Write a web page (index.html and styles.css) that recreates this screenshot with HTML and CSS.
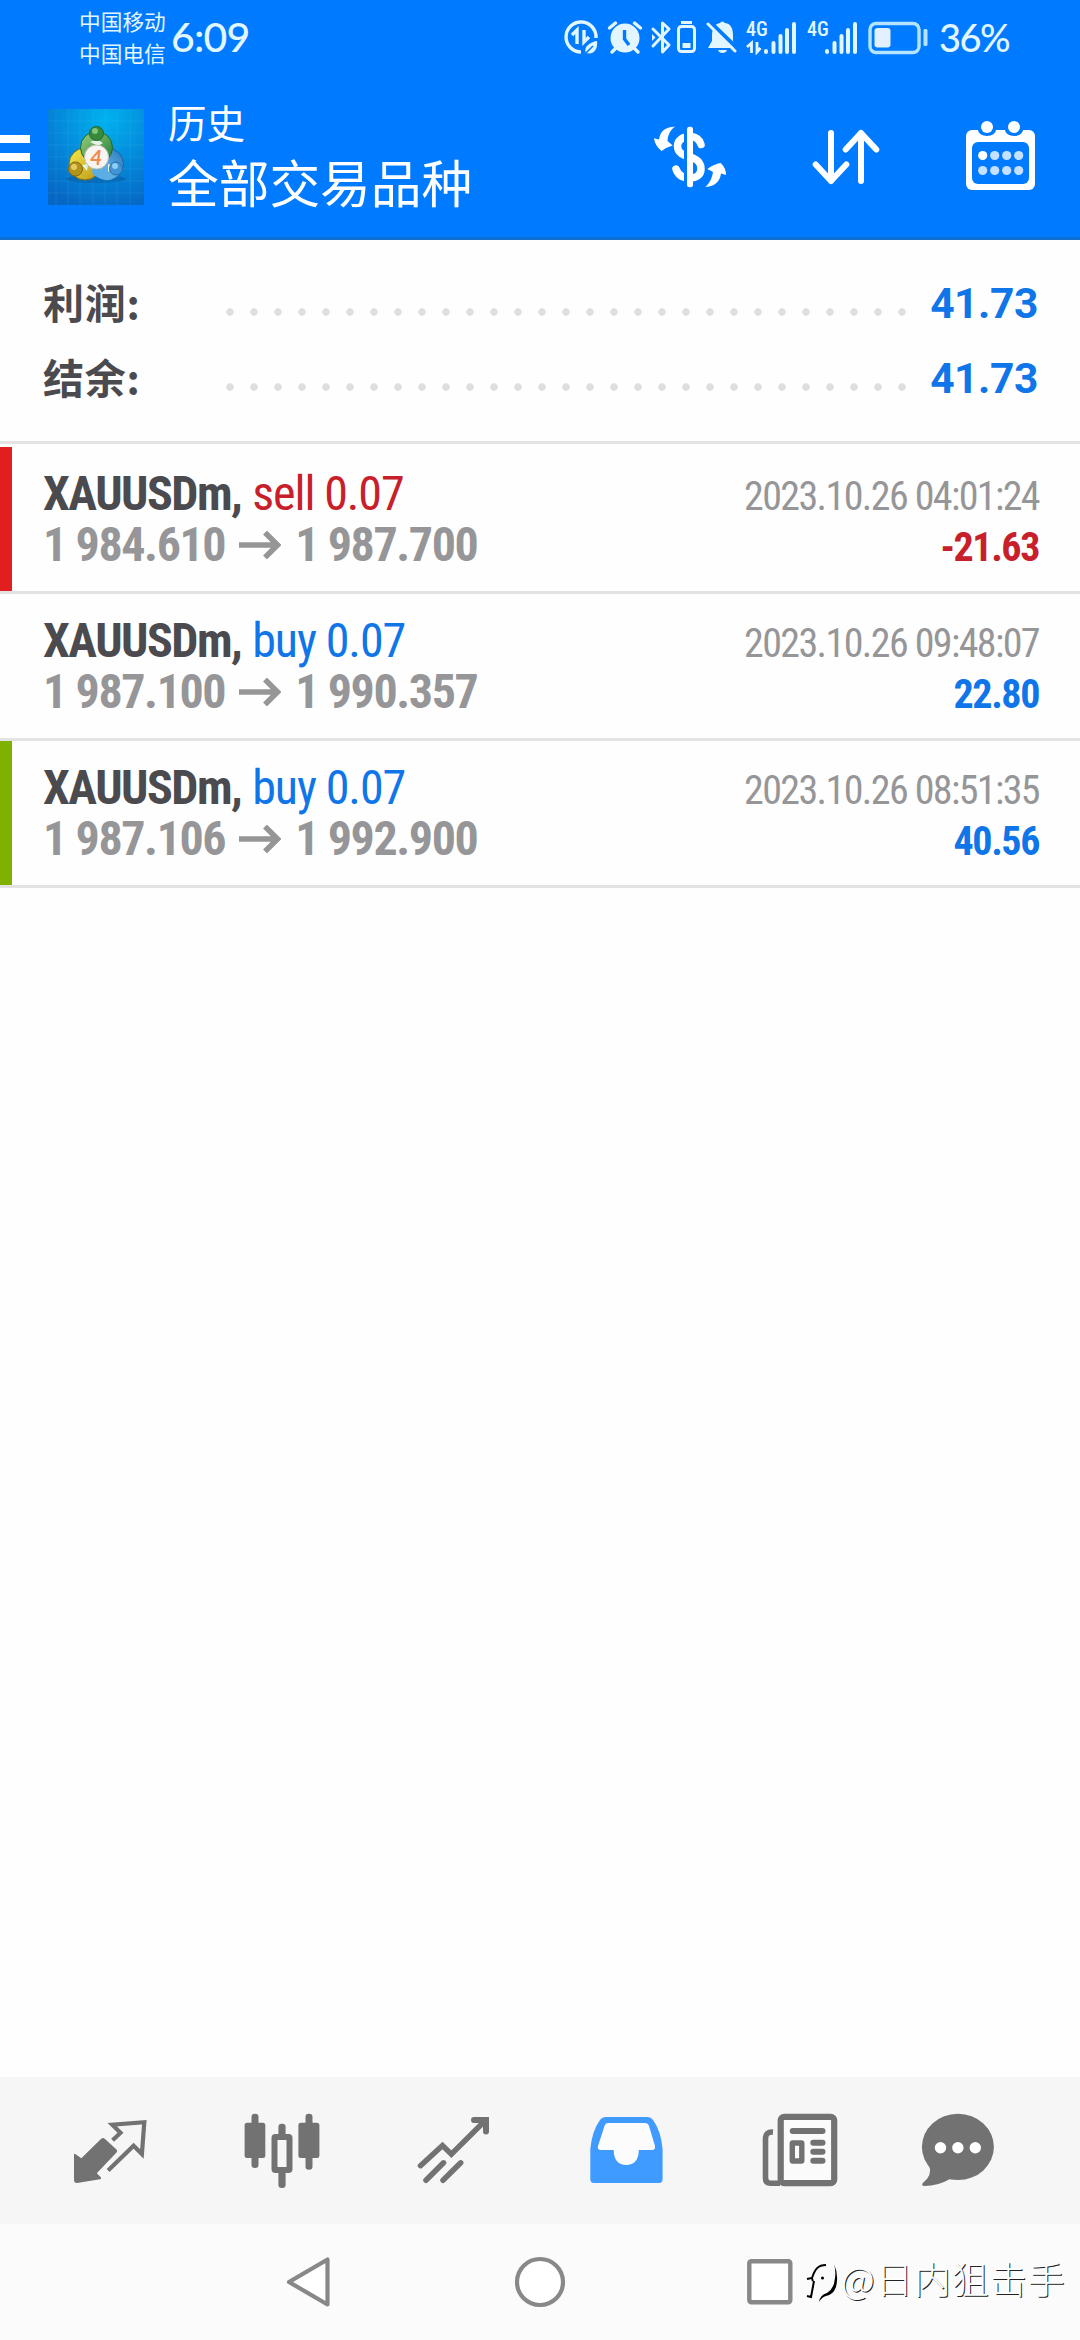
FILE: index.html
```html
<!DOCTYPE html>
<html lang="zh-CN">
<head>
    <meta charset="UTF-8">
    <title>历史</title>
    <link rel="stylesheet" href="styles.css">
</head>
<body>
    <header class="header">
        <div class="status-bar">
            <div class="carriers">
                <span>中国移动</span>
                <span>中国电信</span>
            </div>
            <span class="clock">6:09</span>
            <div class="status-icons">
                <!-- data saver -->
                <svg width="42" height="36" viewBox="0 0 42 36">
                    <path d="M32 19 A15 15 0 1 0 17 33" fill="none" stroke="#e2f6ff" stroke-width="3.4" />
                    <path d="M8 16 L13 11 V25 M20 11 V23 L25 18" fill="none" stroke="#e2f6ff" stroke-width="3.4" />
                    <path d="M33 22 C34 30 30 36 22 34 C19 28 26 23 33 22 Z" fill="#e2f6ff" />
                    <path d="M21 35 L29 27" stroke="#007aff" stroke-width="1.6" />
                </svg>
                <!-- alarm -->
                <svg width="44" height="36" viewBox="-2 0 44 36">
                    <circle cx="17" cy="19" r="14.5" fill="#e2f6ff" />
                    <path d="M1.5 9 L7.5 4 M26.5 4 L32.5 9 M4 33 L8 29 M30 33 L26 29" stroke="#e2f6ff" stroke-width="3.4" stroke-linecap="round" />
                    <path d="M16.5 11 V20 L21 26" fill="none" stroke="#007aff" stroke-width="3.4" />
                </svg>
                <!-- bluetooth and device battery -->
                <svg width="56" height="36" viewBox="0 0 56 36">
                    <path d="M3 10 L19 26 L12.5 33 V4 L19 10 L3 27" fill="none" stroke="#e2f6ff" stroke-width="3" stroke-linejoin="round" stroke-linecap="round" />
                    <path d="M2 15 L5.500 18.500 L2 22 Z" fill="#e2f6ff" />
                    <rect x="28.500" y="7.500" width="16" height="25" rx="3" fill="none" stroke="#e2f6ff" stroke-width="3" />
                    <path d="M31 3.500 H42" stroke="#e2f6ff" stroke-width="3" />
                    <rect x="32.500" y="24" width="8" height="5" fill="#e2f6ff" />
                </svg>
                <!-- muted bell -->
                <svg width="40" height="36" viewBox="0 0 40 36">
                    <path d="M2 29 L6 22 V17 C6 9 9 5 14 4 Q16 1 19 4 C25 5 27 9 27 17 V22 L30 29 Z" fill="#e2f6ff" />
                    <path d="M12 31 H21 Q20 34 16.500 34 Q13 34 12 31 Z" fill="#e2f6ff" />
                    <path d="M4 3 L33 31" stroke="#007aff" stroke-width="4" />
                    <path d="M2 5 L29 32" stroke="#e2f6ff" stroke-width="3" stroke-linecap="round" />
                </svg>
                <div class="signal">
                    <span class="signal-type">4G</span>
                    <svg width="52" height="36" viewBox="0 0 52 36">
                        <path d="M1 28 L5.500 24 V34 M11 23 V33 L14.500 29" fill="none" stroke="#e2f6ff" stroke-width="2.800" />
                        <path d="M20 32 V33 M27.500 24 V33 M34.500 17 V33 M41 11 V33 M48 5 V33" stroke="#e2f6ff" stroke-width="4" stroke-linecap="round" />
                    </svg>
                </div>
                <div class="signal">
                    <span class="signal-type">4G</span>
                    <svg width="52" height="36" viewBox="0 0 52 36">
                        <path d="M20 32 V33 M27.500 24 V33 M34.500 17 V33 M41 11 V33 M48 5 V33" stroke="#e2f6ff" stroke-width="4" stroke-linecap="round" />
                    </svg>
                </div>
                <!-- battery -->
                <svg width="60" height="36" viewBox="0 0 60 36">
                    <rect x="2" y="4.500" width="49" height="29" rx="6" fill="none" stroke="#b4e4ff" stroke-width="3.400" />
                    <rect x="6.500" y="9" width="16" height="19.500" rx="3" fill="#e2f0ff" />
                    <rect x="55.500" y="10" width="4" height="17" rx="1.500" fill="#b4e4ff" />
                </svg>
            </div>
            <span class="battery-level">36%</span>
        </div>

        <div class="app-bar">
            <div class="menu">
                <span></span>
                <span></span>
                <span></span>
            </div>
            <svg class="logo" viewBox="0 0 96 96">
                <defs>
                    <radialGradient id="sky" cx="0.6" cy="0.1" r="0.95">
                        <stop offset="0" stop-color="#00b2ee" />
                        <stop offset="0.5" stop-color="#048bdc" />
                        <stop offset="1" stop-color="#0668c4" />
                    </radialGradient>
                    <linearGradient id="green" x1="0" y1="0" x2="1" y2="1">
                        <stop offset="0" stop-color="#9bd07c" />
                        <stop offset="1" stop-color="#1e7a35" />
                    </linearGradient>
                    <linearGradient id="yellow" x1="0" y1="0" x2="1" y2="1">
                        <stop offset="0" stop-color="#f5ec4e" />
                        <stop offset="1" stop-color="#bd9613" />
                    </linearGradient>
                    <linearGradient id="blue" x1="0" y1="1" x2="1" y2="0">
                        <stop offset="0" stop-color="#8fd4fa" />
                        <stop offset="1" stop-color="#2377bd" />
                    </linearGradient>
                </defs>
                <rect width="96" height="96" fill="url(#sky)" />
                <path d="M8 0 V96 M20 0 V96 M32 0 V96 M45 0 V96 M57 0 V96 M69 0 V96 M82 0 V96 M0 12 H96 M0 24 H96 M0 36 H96 M0 48 H96 M0 60 H96 M0 72 H96 M0 84 H96" stroke="#5cc6f5" stroke-opacity="0.14" />
                <ellipse cx="48" cy="70" rx="30" ry="4" fill="#07508f" opacity="0.4" />
                <circle cx="60" cy="55" r="15.500" fill="url(#blue)" stroke="#1c5f9c" />
                <circle cx="37" cy="55" r="16" fill="url(#yellow)" stroke="#7c6c13" />
                <circle cx="48.500" cy="38.500" r="16" fill="url(#green)" stroke="#1f682c" />
                <path d="M45 66 Q42 57 48 52 L64 58 Q70 59 72 64 Q64 74 53 70 Z" fill="#5caee2" />
                <path d="M42 33 Q49 29 55 34 L50 37 Z M34 56 L40 55 L39 62 Z M60 55 L66 57 L60 63 Z" fill="#e5f5e5" />
                <circle cx="48.500" cy="24.500" r="7" fill="#378a3d" stroke="#1f682c" />
                <circle cx="27.500" cy="60" r="7" fill="#b4931a" stroke="#806b14" />
                <circle cx="68" cy="59.500" r="6.500" fill="#3f94d6" stroke="#2a70aa" />
                <circle cx="47" cy="22" r="3" fill="#83c47c" />
                <circle cx="26" cy="58" r="3" fill="#e6cc5f" />
                <circle cx="67" cy="57" r="3" fill="#92cdf3" />
                <circle cx="48.500" cy="48" r="12" fill="#f8f4f1" stroke="#c2c2b8" />
                <text x="48" y="55.500" class="logo-number" text-anchor="middle">4</text>
            </svg>
            <div class="titles">
                <div class="title">历史</div>
                <div class="subtitle">全部交易品种</div>
            </div>
            <div class="actions">
                <!-- deals -->
                <svg width="84" height="84" viewBox="0 -6 84 84">
                    <path d="M53 23.500 C51 17 47 15.500 42 15.500 C34 15.500 29.500 20 29.500 25 C29.500 32 35 34 42 36 C49 38 53 41 53 48 C53 54 48 57 42 57 C34 57 30 54 28 48" fill="none" stroke="#fff" stroke-width="7.500" stroke-linecap="round" />
                    <rect x="36" y="5" width="3" height="62" fill="#007aff" />
                    <rect x="39" y="5.700" width="6" height="60.600" rx="2.500" fill="#fff" />
                    <path d="M27 5.700 C15 6 12 12 11 18.500 L6 17.300 Q7 25 13.500 30 Q19 26 24.700 24.500 L19.500 20 C20 14 22 9 27 5.700 Z" fill="#fff" />
                    <path d="M57.300 66 C69 65 72 59 73 52.500 L78 54 Q78 47 72.700 42 Q66 43 59.300 48 L65 51 C64 57 62 62 57.300 66 Z" fill="#fff" />
                </svg>
                <!-- sort -->
                <svg width="84" height="84" viewBox="0 -6 84 84">
                    <path d="M27 12 V60 M11.700 43.500 L27 60 L42.300 43.500 M57 60 V12 M41.700 28.500 L57 12 L72.300 28.500" fill="none" stroke="#fff" stroke-width="6" stroke-linecap="round" stroke-linejoin="round" />
                </svg>
                <!-- calendar -->
                <svg width="84" height="84" viewBox="0 0 84 84">
                    <rect x="6" y="15" width="69" height="60" rx="6" fill="#fff" />
                    <rect x="12" y="27" width="57" height="42" rx="6" fill="#007aff" />
                    <path d="M18 15 A9 6 0 0 0 36 15 Z M45 15 A9 6 0 0 0 63 15 Z" fill="#007aff" />
                    <circle cx="27" cy="12" r="6" fill="#fff" />
                    <circle cx="54" cy="12" r="6" fill="#fff" />
                    <circle cx="22.700" cy="40.500" r="4.600" fill="#fff" />
                    <g fill="#c4e1ff">
                        <circle cx="34.700" cy="40.500" r="4.600" />
                        <circle cx="46.700" cy="40.500" r="4.600" />
                        <circle cx="58.700" cy="40.500" r="4.600" />
                        <circle cx="22.700" cy="55.500" r="4.600" />
                        <circle cx="34.700" cy="55.500" r="4.600" />
                        <circle cx="46.700" cy="55.500" r="4.600" />
                        <circle cx="58.700" cy="55.500" r="4.600" />
                    </g>
                </svg>
            </div>
        </div>
    </header>

    <section class="summary">
        <div class="summary-row">
            <span class="summary-label">利润:</span>
            <span class="dots"></span>
            <span class="summary-value">41.73</span>
        </div>
        <div class="summary-row">
            <span class="summary-label">结余:</span>
            <span class="dots"></span>
            <span class="summary-value">41.73</span>
        </div>
    </section>

    <main class="deals">
        <div class="deal stop-loss">
            <div class="deal-info">
                <div class="deal-line"><span class="symbol">XAUUSDm,</span><span class="sell">sell 0.07</span></div>
                <div class="deal-line price">
                    <span>1 984.610</span>
                    <svg width="42" height="28" viewBox="0 0 42 28"><path d="M0 14 H38 M26 1.500 L38.500 14 L26 26.500" fill="none" stroke="#969698" stroke-width="5.500" /></svg>
                    <span>1 987.700</span>
                </div>
            </div>
            <div class="deal-result">
                <div class="date">2023.10.26 04:01:24</div>
                <div class="profit loss">-21.63</div>
            </div>
        </div>
        <div class="deal">
            <div class="deal-info">
                <div class="deal-line"><span class="symbol">XAUUSDm,</span><span class="buy">buy 0.07</span></div>
                <div class="deal-line price">
                    <span>1 987.100</span>
                    <svg width="42" height="28" viewBox="0 0 42 28"><path d="M0 14 H38 M26 1.500 L38.500 14 L26 26.500" fill="none" stroke="#969698" stroke-width="5.500" /></svg>
                    <span>1 990.357</span>
                </div>
            </div>
            <div class="deal-result">
                <div class="date">2023.10.26 09:48:07</div>
                <div class="profit">22.80</div>
            </div>
        </div>
        <div class="deal take-profit">
            <div class="deal-info">
                <div class="deal-line"><span class="symbol">XAUUSDm,</span><span class="buy">buy 0.07</span></div>
                <div class="deal-line price">
                    <span>1 987.106</span>
                    <svg width="42" height="28" viewBox="0 0 42 28"><path d="M0 14 H38 M26 1.500 L38.500 14 L26 26.500" fill="none" stroke="#969698" stroke-width="5.500" /></svg>
                    <span>1 992.900</span>
                </div>
            </div>
            <div class="deal-result">
                <div class="date">2023.10.26 08:51:35</div>
                <div class="profit">40.56</div>
            </div>
        </div>
    </main>

    <nav class="tabs">
        <!-- quotes -->
        <svg width="84" height="84" viewBox="0 0 84 84">
            <path d="M6 45.300 Q6 44 8 45.500 L13.300 49.300 L33 30 Q35 28 37 30 L48.500 40.500 Q50 42 48.500 43.500 L28.800 64.300 L33 68.500 Q33.500 70 32 70.200 L9 74 Q6 74 6 71 Z" fill="#727272" />
            <path d="M44.600 31.300 L52.500 23.700 L44.300 15.700 L76.300 13.200 L73.900 45 L65.600 36.700 L40.100 61.500" fill="none" stroke="#727272" stroke-width="4.200" />
        </svg>
        <!-- charts -->
        <svg width="84" height="84" viewBox="0 0 84 84" fill="#727272">
            <rect x="4.600" y="13.700" width="20.700" height="35.300" rx="2.500" />
            <rect x="11.500" y="4.700" width="7" height="54.300" rx="3.300" />
            <rect x="38.400" y="14.700" width="7.200" height="14" rx="3.300" />
            <rect x="38.400" y="61" width="7.200" height="18" rx="3.300" />
            <rect x="34.500" y="28" width="15" height="33" rx="1" fill="none" stroke="#727272" stroke-width="6" />
            <rect x="58.400" y="13.700" width="21" height="35.300" rx="2.500" />
            <rect x="65.500" y="4.700" width="7" height="56" rx="3.300" />
        </svg>
        <!-- trade -->
        <svg width="84" height="84" viewBox="0 0 84 84">
            <path d="M9.500 56.700 L31.500 36.500 L40.400 45.200 L74.500 11.300" fill="none" stroke="#727272" stroke-width="5.500" stroke-linecap="round" />
            <path d="M63 11 H75 V22.500" fill="none" stroke="#727272" stroke-width="6" stroke-linecap="round" />
            <path d="M15 71.300 L32.500 53.800 M32 71.300 L49.700 53.800" stroke="#727272" stroke-width="5.500" stroke-linecap="round" />
        </svg>
        <!-- history -->
        <svg width="84" height="84" viewBox="0 0 84 84">
            <path d="M6.300 40 Q8 22 16 11 Q18 8 22 8 H63 Q67 8 69 11 Q77 22 78.600 40 V70 Q78.600 74 75 74 H10 Q6.300 74 6.300 70 Z" fill="#3f9bff" />
            <path d="M24 14 H61 Q64 14 65 17 L71 37 Q71.500 41 68 41 H54.800 C54.800 51 50 56 42.300 56 C34.500 56 29.700 51 29.700 41 H17 Q13 41 14 37 L20.500 17 Q21.500 14 24 14 Z" fill="#fcfcfc" />
        </svg>
        <!-- news -->
        <svg width="84" height="84" viewBox="0 0 84 84">
            <rect x="22.700" y="7.900" width="53.500" height="66.300" rx="3.500" fill="#fbfbfb" stroke="#727272" stroke-width="6.200" />
            <path d="M15 23 Q7.500 22.500 7.500 30 V69 Q7.500 74.300 12.500 74.300 H22" fill="none" stroke="#727272" stroke-width="5.600" />
            <path d="M34.700 22 H64.500 M55.300 33.700 H64.500 M55.300 42.700 H64.500 M55.300 51.700 H64.500" stroke="#727272" stroke-width="6" stroke-linecap="round" />
            <rect x="34.300" y="34" width="9.500" height="18" rx="0.500" fill="#fbfbfb" stroke="#727272" stroke-width="5.400" />
        </svg>
        <!-- chat -->
        <svg width="84" height="84" viewBox="0 0 84 84">
            <ellipse cx="41.900" cy="37.900" rx="36" ry="33.200" fill="#727272" />
            <path d="M13 56 Q17 66 6.800 74 Q5 77 8.500 77 Q22 77 34 70 Z" fill="#727272" />
            <circle cx="24.500" cy="38.700" r="5.700" fill="#fff" />
            <circle cx="41.900" cy="38.700" r="5.700" fill="#fff" />
            <circle cx="59.300" cy="38.700" r="5.700" fill="#fff" />
        </svg>
    </nav>

    <footer class="system-nav">
        <svg width="52" height="52" viewBox="0 0 52 52">
            <path d="M5 26 L43.500 3.500 V48.500 Z" fill="#fff" stroke="#888" stroke-width="4.200" stroke-linejoin="round" />
        </svg>
        <svg width="52" height="52" viewBox="0 0 52 52">
            <circle cx="26" cy="26" r="23" fill="#fff" stroke="#888" stroke-width="4.200" />
        </svg>
        <svg width="52" height="52" viewBox="0 0 52 52">
            <rect x="5.300" y="5.300" width="41" height="41" rx="2" fill="#fff" stroke="#888" stroke-width="4.400" />
        </svg>
        <div class="watermark">
            <svg width="36" height="42" viewBox="0 0 36 42">
                <path d="M2 18 L7 17 C10 8 13 4 21 4 M7 18 L8 20 M9 20 L6 36 L2 35" fill="none" stroke="#000" stroke-width="2" />
                <path d="M29 3 Q34 14 31 26 Q28 34 21 35 Q17 36 14 41 Q15 34 22 32 Q29 28 30 17 Q31 9 29 3 Z" fill="#000" />
                <circle cx="17.500" cy="17" r="1.500" fill="#000" />
            </svg>
            <span>@日内狙击手</span>
        </div>
    </footer>
</body>
</html>
```
FILE: styles.css
```css
* {
    box-sizing: border-box;
}
body {
    font-family: Roboto, "Noto Sans CJK SC", sans-serif;
    background-color: #fefefe;
    color: #4b4b4f;
    margin: 0;
    height: 2340px;
    display: flex;
    flex-direction: column;
    overflow: hidden;
}
svg {
    display: block;
    flex: none;
}

/* header */
.header {
    height: 240px;
    background-color: #007aff;
    border-bottom: 3px solid #0f6fd0;
    color: #fff;
}
.status-bar {
    height: 76px;
    display: flex;
    align-items: center;
    padding-left: 79px;
    padding-bottom: 3px;
    color: #e2f6ff;
}
.carriers {
    display: flex;
    flex-direction: column;
    width: 92px;
    font-family: "Noto Sans CJK SC", sans-serif;
    font-size: 21.7px;
    line-height: 32px;
}
.clock {
    width: 77px;
    font-family: Lato, sans-serif;
    font-size: 41px;
    font-weight: 500;
    letter-spacing: -0.8px;
}
.status-icons {
    display: flex;
    margin-left: 316px;
}
.signal {
    display: flex;
    width: 61px;
    position: relative;
}
.signal-type {
    position: absolute;
    left: 0;
    top: 0;
    font-size: 20px;
    font-weight: 500;
    line-height: 20px;
    font-stretch: 75%;
}
.battery-level {
    margin-left: 11px;
    font-family: Lato, sans-serif;
    font-size: 38px;
    font-weight: 500;
    letter-spacing: -1.5px;
}
.app-bar {
    height: 161px;
    display: flex;
    align-items: center;
    padding-right: 36px;
}
.menu {
    width: 30px;
    display: flex;
    flex-direction: column;
    gap: 10px;
}
.menu span {
    height: 8px;
    background-color: #fff;
}
.logo {
    width: 96px;
    height: 96px;
    margin-left: 18px;
}
.logo-number {
    font-family: Lato, sans-serif;
    font-size: 21px;
    font-style: italic;
    font-weight: bold;
    fill: #ef8b4b;
}
.titles {
    margin-left: 24px;
    padding-bottom: 12px;
    font-family: "Noto Sans CJK SC", sans-serif;
}
.title {
    font-size: 38.5px;
    line-height: 60px;
}
.subtitle {
    font-size: 50.7px;
    line-height: 60px;
}
.actions {
    display: flex;
    gap: 72px;
    margin-left: auto;
}

/* totals */
.summary {
    height: 204px;
    padding: 26px 42px 0 43px;
    border-bottom: 3px solid #e3e3e3;
}
.summary-row {
    height: 75px;
    display: flex;
    align-items: center;
    font-weight: bold;
}
.summary-label {
    width: 175px;
    padding-bottom: 4px;
    font-family: "Noto Sans CJK SC", sans-serif;
    font-size: 41px;
    line-height: 71px;
    letter-spacing: 0.8px;
}
.dots {
    width: 696px;
    height: 8px;
    margin-top: 16px;
    background-image: radial-gradient(circle at 12px 4px, #dedede 3.3px, transparent 4.2px);
    background-size: 24px 8px;
}
.summary-value {
    margin-left: auto;
    font-size: 42.5px;
    letter-spacing: -0.4px;
    color: #0f75e8;
}

/* deals list */
.deals {
    flex: 1;
    padding-top: 3px;
}
.deal {
    height: 147px;
    display: flex;
    justify-content: space-between;
    padding: 21px 41px 0 43px;
    border-bottom: 3px solid #e3e3e3;
    font-stretch: 75%;
}
.stop-loss {
    background: linear-gradient(#e21f1f, #e21f1f) no-repeat 0 0 / 12px 144px;
}
.take-profit {
    background: linear-gradient(#80b000, #80b000) no-repeat 0 0 / 12px 144px;
}
.deal-line {
    display: flex;
    font-size: 48px;
    line-height: 51px;
    letter-spacing: -1.1px;
    white-space: nowrap;
}
.symbol {
    font-weight: bold;
    letter-spacing: -1.5px;
    margin-right: 11px;
}
.sell {
    color: #c8202a;
}
.buy {
    color: #0f75e8;
}
.price {
    align-items: center;
    gap: 14px;
    font-weight: bold;
    letter-spacing: -1.4px;
    color: #969698;
}
.deal-result {
    text-align: right;
    font-size: 40px;
    line-height: 51px;
    white-space: nowrap;
    padding-top: 3px;
}
.date {
    letter-spacing: -1.6px;
    color: #969698;
}
.profit {
    font-weight: bold;
    letter-spacing: -1.4px;
    color: #0f75e8;
}
.loss {
    color: #c8202a;
}

/* bottom tabs */
.tabs {
    height: 147px;
    display: grid;
    grid-template-columns: 172px 171px 172px 174px 174px 142px;
    align-items: center;
    justify-items: center;
    padding-left: 24px;
    background-color: #f6f6f6;
}
.system-nav {
    height: 116px;
    display: flex;
    align-items: center;
    padding-left: 284px;
    gap: 178px;
    background-color: #fbfbfb;
}
.watermark {
    display: flex;
    align-items: center;
    margin-left: -169px;
    font-family: "Noto Sans CJK SC", sans-serif;
    font-size: 37px;
    font-weight: 300;
    line-height: 44px;
    letter-spacing: 1px;
    padding-bottom: 8px;
    color: #fff;
    text-shadow: 1px 1px 0 #222;
    white-space: nowrap;
}
.watermark svg {
    margin-top: 8px;
}
```
